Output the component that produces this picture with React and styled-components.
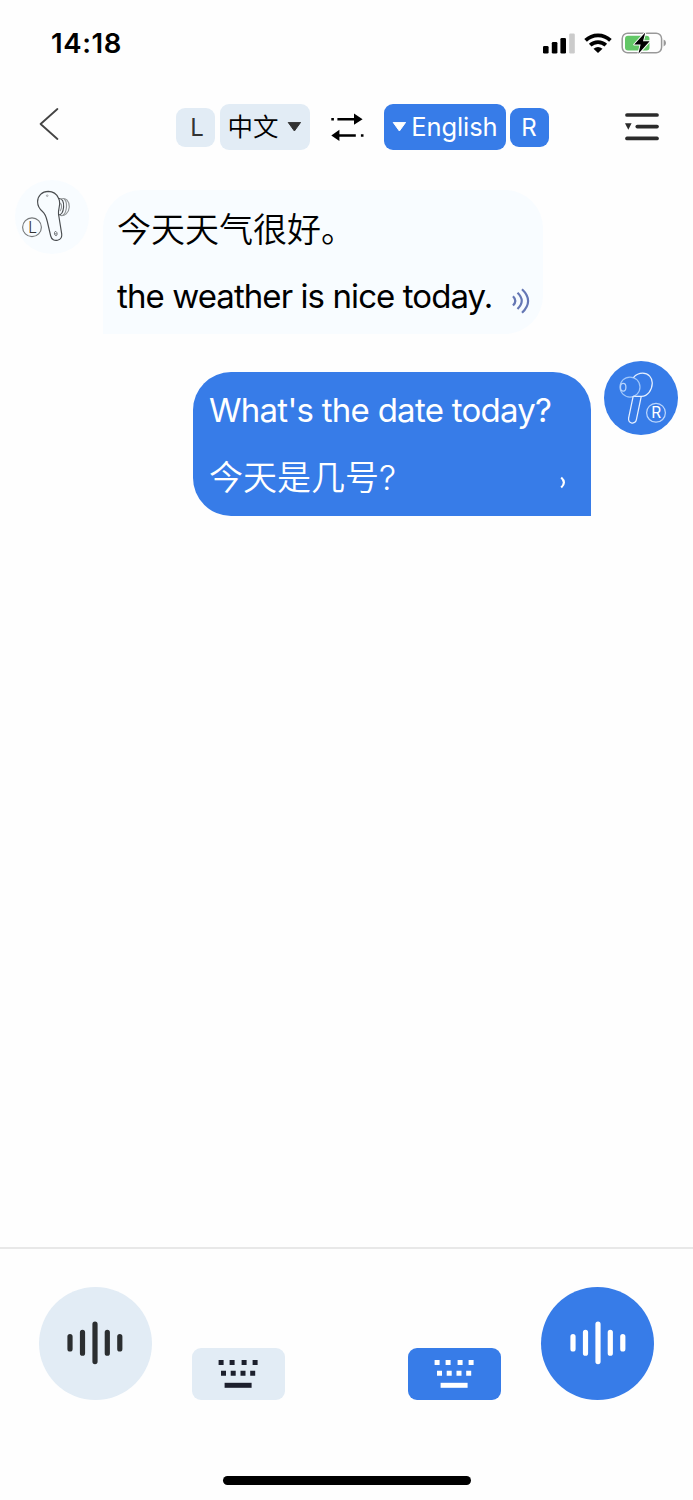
import React from "react";
import styled, { createGlobalStyle } from "styled-components";

const BLUE = "#377ce8";
const PALE = "#e2ecf5";
const MIST = "#f8fcff";

const GlobalStyle = createGlobalStyle`
  * { box-sizing: border-box; }
  body {
    margin: 0;
    background: #fff;
    font-family: Inter, "Noto Sans CJK SC", sans-serif;
  }
  svg { display: block; flex: none; }
`;

const Screen = styled.div`
  width: 693px;
  height: 1500px;
  display: flex;
  flex-direction: column;
  background: #fefefe;
  color: #000;
`;

const StatusBar = styled.div`
  height: 86px;
  padding: 0 27px 0 51px;
  display: flex;
  align-items: center;
  justify-content: space-between;
`;

const Time = styled.div`
  font-size: 27.5px;
  font-weight: 600;
  letter-spacing: 0.6px;
  line-height: 34px;
`;

const StatusIcons = styled.div`
  display: flex;
  align-items: center;
  gap: 9px;
`;

const Header = styled.div`
  height: 82px;
  padding: 0 34px 0 39px;
  display: flex;
  align-items: center;
  justify-content: space-between;
`;

const IconButton = styled.button`
  border: 0;
  padding: 0;
  background: none;
  display: block;
`;

const LanguageBar = styled.div`
  display: flex;
  align-items: center;
  margin-left: 40px;
`;

const LanguageGroup = styled.div`
  display: flex;
  align-items: center;
  gap: ${(p) => p.$gap}px;
`;

const SideTag = styled.div`
  width: 39px;
  height: 39px;
  border-radius: 9px;
  display: flex;
  align-items: center;
  justify-content: center;
  padding-left: ${(p) => (p.$active ? 0 : 4)}px;
  font-size: 24px;
  line-height: 39px;
  background: ${(p) => (p.$active ? BLUE : PALE)};
  color: ${(p) => (p.$active ? "#fff" : "#333")};
`;

const LanguageButton = styled.button`
  width: ${(p) => p.$width}px;
  height: 46px;
  border: 0;
  border-radius: 9px;
  padding: 0 8px;
  display: flex;
  align-items: center;
  justify-content: space-between;
  font: inherit;
  font-size: 25.5px;
  font-weight: ${(p) => p.$weight || 400};
  line-height: 46px;
  letter-spacing: ${(p) => p.$spacing || 0}px;
  white-space: nowrap;
  background: ${(p) => (p.$active ? BLUE : PALE)};
  color: ${(p) => (p.$active ? "#fff" : "#000")};
`;

const SwapButton = styled(IconButton)`
  margin: 0 20px 0 21px;
`;

const Chat = styled.div`
  flex: 1;
  padding: 12px 15px 0;
  display: flex;
  flex-direction: column;
  gap: 26.5px;
`;

const Message = styled.div`
  display: flex;
  align-items: flex-start;
  justify-content: ${(p) => (p.$own ? "flex-end" : "flex-start")};
  gap: ${(p) => (p.$own ? 13 : 14)}px;
`;

const Avatar = styled.div`
  width: 74px;
  height: 74px;
  border-radius: 50%;
  background: ${(p) => (p.$own ? BLUE : MIST)};
`;

const Bubble = styled.div`
  width: ${(p) => (p.$own ? 398 : 440)}px;
  height: 144px;
  margin-top: ${(p) => (p.$own ? 11 : 10)}px;
  padding: ${(p) => (p.$own ? 5 : 6)}px 16px 0 ${(p) => (p.$own ? 16 : 14)}px;
  border-radius: ${(p) => (p.$own ? "38px 38px 0 38px" : "38px 38px 38px 0")};
  background: ${(p) => (p.$own ? BLUE : MIST)};
  color: ${(p) => (p.$own ? "#fff" : "#000")};
`;

const Line = styled.div`
  height: 67px;
  display: flex;
  align-items: center;
  justify-content: space-between;
  font-size: ${(p) => p.$size}px;
  font-weight: ${(p) => p.$weight || 400};
  letter-spacing: ${(p) => p.$spacing || 0}px;
  line-height: 67px;
  white-space: nowrap;
`;

const Footer = styled.div`
  height: 253px;
  border-top: 2px solid #e8e8e8;
  padding: 38px 39px 15px;
  display: flex;
  flex-direction: column;
  align-items: center;
  justify-content: space-between;
`;

const Controls = styled.div`
  width: 100%;
  display: flex;
  justify-content: space-between;
`;

const ControlGroup = styled.div`
  display: flex;
  align-items: flex-end;
  gap: 40px;
`;

const TalkButton = styled.button`
  width: 113px;
  height: 113px;
  border: 0;
  border-radius: 50%;
  padding: 0 ${(p) => (p.$active ? 0 : 2)}px 1px 0;
  display: flex;
  align-items: center;
  justify-content: center;
  background: ${(p) => (p.$active ? BLUE : PALE)};
  color: ${(p) => (p.$active ? "#fff" : "#2b2e30")};
`;

const KeyboardButton = styled.button`
  width: 93px;
  height: 52px;
  border: 0;
  border-radius: 9px;
  padding: 0 1px 0 0;
  display: flex;
  align-items: center;
  justify-content: center;
  background: ${(p) => (p.$active ? BLUE : PALE)};
  color: ${(p) => (p.$active ? "#fff" : "#1d202d")};
`;

const HomeIndicator = styled.div`
  width: 248px;
  height: 9px;
  border-radius: 5px;
  background: #000;
`;

const Signal = () => (
  <svg width="32" height="21" viewBox="0 0 32 21">
    <rect x="0" y="13" width="5.6" height="7.5" rx="1.3" />
    <rect x="8.8" y="9" width="5.6" height="11.5" rx="1.3" />
    <rect x="17.4" y="5" width="5.6" height="15.5" rx="1.3" />
    <rect x="26.2" y="0.5" width="5.6" height="20" rx="1.3" fill="#cbcbcb" />
  </svg>
);

const Wifi = () => (
  <svg width="28" height="21" viewBox="0 0 28 21">
    <g fill="none" stroke="#000" strokeWidth="3.7">
      <path d="M1.6 7.4 A17.6 17.6 0 0 1 26.4 7.4" />
      <path d="M6.2 12.2 A11.2 11.2 0 0 1 21.8 12.2" />
    </g>
    <path d="M14 20 L9.5 15.7 Q14 12.2 18.5 15.7 Z" />
  </svg>
);

const Battery = () => (
  <svg width="45" height="23" viewBox="0 0 45 23">
    <rect x="1.2" y="1.2" width="39.4" height="19.6" rx="5.5" fill="none" stroke="#999" strokeWidth="1.5" />
    <path d="M42.6 7.6 Q45 8.2 45 11 Q45 13.8 42.6 14.4 Z" fill="#999" />
    <rect x="4" y="3.8" width="24.5" height="14.6" rx="3" fill="#62c766" />
    <path
      d="M24.3 0.4 L13.2 12.6 L19.6 12.6 L17.4 21.8 L28.6 9.3 L22 9.3 Z"
      stroke="#fff"
      strokeWidth="1.9"
      strokeLinejoin="round"
      paintOrder="stroke"
    />
  </svg>
);

const Caret = ({ color }) => (
  <svg width="15" height="11" viewBox="0 0 15 11">
    <path d="M1.2 0.4 H13.6 L7.4 9 Z" fill={color} stroke={color} strokeLinejoin="round" />
  </svg>
);

const Swap = () => (
  <svg width="33" height="28" viewBox="0 0 33 28">
    <path d="M0.3 5 h2.6 v2.6 h-2.6 Z M6.4 5 H23 V0.6 L31.6 6.2 L23 11.8 V7.6 H6.4 Z" />
    <path d="M32.5 21.2 h-2.6 v2.6 h2.6 Z M24.8 21.2 H8.4 V16.8 L0.3 22.4 L8.4 28 V23.8 H24.8 Z" />
  </svg>
);

const Menu = () => (
  <svg width="34" height="28" viewBox="0 0 34 28">
    <g stroke="#2b2b2b" strokeWidth="3.7" strokeLinecap="round">
      <path d="M2 2 H32" />
      <path d="M12.3 13.6 H32" />
      <path d="M2 25.4 H32" />
    </g>
    <path d="M0 10.3 H6.6 L3.3 16.8 Z" fill="#2b2b2b" />
  </svg>
);

const LeftBud = () => (
  <svg width="74" height="74" viewBox="0 0 74 74" fill="none" stroke="#4a4d50" strokeWidth="1.15">
    <path d="M43.4 18 C41.6 14 37.7 11.5 33.3 11.4 C27 11.5 22.6 16 22.6 21.8 C22.6 26 24.5 29 27.5 31.5 C30.5 34 31.5 38 32.3 41.5 L35.7 56 C36.5 59.5 39.5 61 42.6 60.2 C45.7 59.4 47.2 57.2 46.7 53.8 L43.5 34 C42.7 29.4 45.8 26 44.4 20.5 Z" />
    <path d="M43.5 18.5 C47.5 18 49 22 48.6 27 C48.2 32 46.4 35 43.3 35" />
    <path d="M46 19 C51 17 54.5 21.5 54.3 27 C54 32.5 49.5 37 44.5 35.3" stroke="#929698" />
    <path d="M49 19 C52.5 21 52.5 31.5 48 35.3 M45.3 23 C47.3 25 46.8 29 45 31" stroke="#929698" />
    <circle cx="32.2" cy="15.7" r="0.8" strokeWidth="0.8" stroke="#929698" />
    <path d="M40.5 51.5 c2 0 2 4.2 .6 4.2 c-2 0 -2.2 -4.2 -.6 -4.2 Z M40.9 53 v1.5" strokeWidth="0.8" />
    <circle cx="17" cy="47.2" r="9.4" stroke="#777a7c" />
    <text x="17.6" y="52.8" textAnchor="middle" fontSize="15.5" fontWeight="300" fill="#333" stroke="none">L</text>
  </svg>
);

const RightBud = () => (
  <svg width="74" height="74" viewBox="0 0 74 74" fill="none" stroke="#e6f0ff" strokeWidth="1.25">
    <circle cx="26" cy="26" r="10" stroke="#9fc6fb" />
    <ellipse cx="19.2" cy="26.2" rx="2.7" ry="3.8" stroke="#b9d5fc" />
    <path d="M29.4 16.6 C32 13.6 35 12.2 38.7 12.2 C44.4 12.2 48.4 16.7 48.3 22.1 C48.1 29 43.7 35.5 37.2 35.3 C34.5 35.7 32 35.5 29.2 35.2" />
    <path d="M29.2 35.2 L24.6 57.2 C23.7 63.2 31.6 63.7 32.5 58.2 L37.3 35.2" />
    <circle cx="52" cy="51.8" r="9.4" stroke="#b9d5fc" />
    <text x="52.2" y="57.4" textAnchor="middle" fontSize="15.5" fill="#fff" stroke="none">R</text>
  </svg>
);

const Speaker = () => (
  <svg width="18" height="26" viewBox="0 0 18 26" fill="none" stroke="#6577b4" strokeWidth="2.2">
    <path d="M1 8.2 Q5.6 12.8 1 17.6" />
    <path d="M5.5 4.7 Q14 12.8 5.5 21" />
    <path d="M10 1.2 Q22.2 12.8 10 24.8" />
  </svg>
);

const SpeakerPulse = () => (
  <svg width="7" height="13" viewBox="0 0 7 13" fill="none" stroke="#fff" strokeWidth="2.2">
    <path d="M1.2 1.5 Q6.6 6.4 1.2 11.5" />
  </svg>
);

const SoundSlot = styled.span`
  margin-top: ${(p) => p.$top}px;
  margin-right: ${(p) => p.$right}px;
`;

const Wave = () => (
  <svg width="56" height="44" viewBox="0 0 56 44" stroke="currentColor" strokeWidth="5.2" strokeLinecap="round">
    <path d="M3 15.5 V28 M15.5 11.3 V32.2 M28 3.2 V40.6 M40.3 11.3 V32.2 M52.8 15.5 V28" />
  </svg>
);

const Keyboard = () => (
  <svg width="40" height="28" viewBox="0 0 40 28" fill="currentColor">
    <path d="M0.6 0h5v5h-5Z M11.6 0h5v5h-5Z M23.6 0h5v5h-5Z M34.6 0h5v5h-5Z" />
    <path d="M3 10.7h5v5h-5Z M12.7 10.7h5v5h-5Z M22.5 10.7h5v5h-5Z M32.2 10.7h5v5h-5Z" />
    <path d="M6.6 22.8h27v5h-27Z" />
  </svg>
);

export default function App() {
  return (
    <Screen>
      <GlobalStyle />
      <StatusBar>
        <Time>14:18</Time>
        <StatusIcons>
          <Signal />
          <Wifi />
          <Battery />
        </StatusIcons>
      </StatusBar>
      <Header>
        <IconButton aria-label="Back">
          <svg width="20" height="38" viewBox="0 0 20 38" fill="none" stroke="#444" strokeWidth="1.8" strokeLinecap="round" strokeLinejoin="round">
            <path d="M18.4 1 L1.6 16 L18.4 31" />
          </svg>
        </IconButton>
        <LanguageBar>
          <LanguageGroup $gap={5}>
            <SideTag>L</SideTag>
            <LanguageButton $width={90} $weight={350}>
              中文
              <Caret color="#333" />
            </LanguageButton>
          </LanguageGroup>
          <SwapButton aria-label="Swap languages">
            <Swap />
          </SwapButton>
          <LanguageGroup $gap={4}>
            <LanguageButton $active $width={122} $spacing={-0.1}>
              <Caret color="#fff" />
              English
            </LanguageButton>
            <SideTag $active>R</SideTag>
          </LanguageGroup>
        </LanguageBar>
        <IconButton aria-label="Menu">
          <Menu />
        </IconButton>
      </Header>
      <Chat>
        <Message>
          <Avatar>
            <LeftBud />
          </Avatar>
          <Bubble>
            <Line $size={34} $weight={350}>今天天气很好。</Line>
            <Line $size={33} $spacing={-0.92}>
              the weather is nice today.
              <SoundSlot $top={9} $right={-3}>
                <Speaker />
              </SoundSlot>
            </Line>
          </Bubble>
        </Message>
        <Message $own>
          <Bubble $own>
            <Line $size={33} $spacing={-0.74}>What's the date today?</Line>
            <Line $size={34} $weight={350}>
              今天是几号?
              <SoundSlot $top={11} $right={8}>
                <SpeakerPulse />
              </SoundSlot>
            </Line>
          </Bubble>
          <Avatar $own>
            <RightBud />
          </Avatar>
        </Message>
      </Chat>
      <Footer>
        <Controls>
          <ControlGroup>
            <TalkButton aria-label="Speak left">
              <Wave />
            </TalkButton>
            <KeyboardButton aria-label="Type left">
              <Keyboard />
            </KeyboardButton>
          </ControlGroup>
          <ControlGroup>
            <KeyboardButton $active aria-label="Type right">
              <Keyboard />
            </KeyboardButton>
            <TalkButton $active aria-label="Speak right">
              <Wave />
            </TalkButton>
          </ControlGroup>
        </Controls>
        <HomeIndicator />
      </Footer>
    </Screen>
  );
}
